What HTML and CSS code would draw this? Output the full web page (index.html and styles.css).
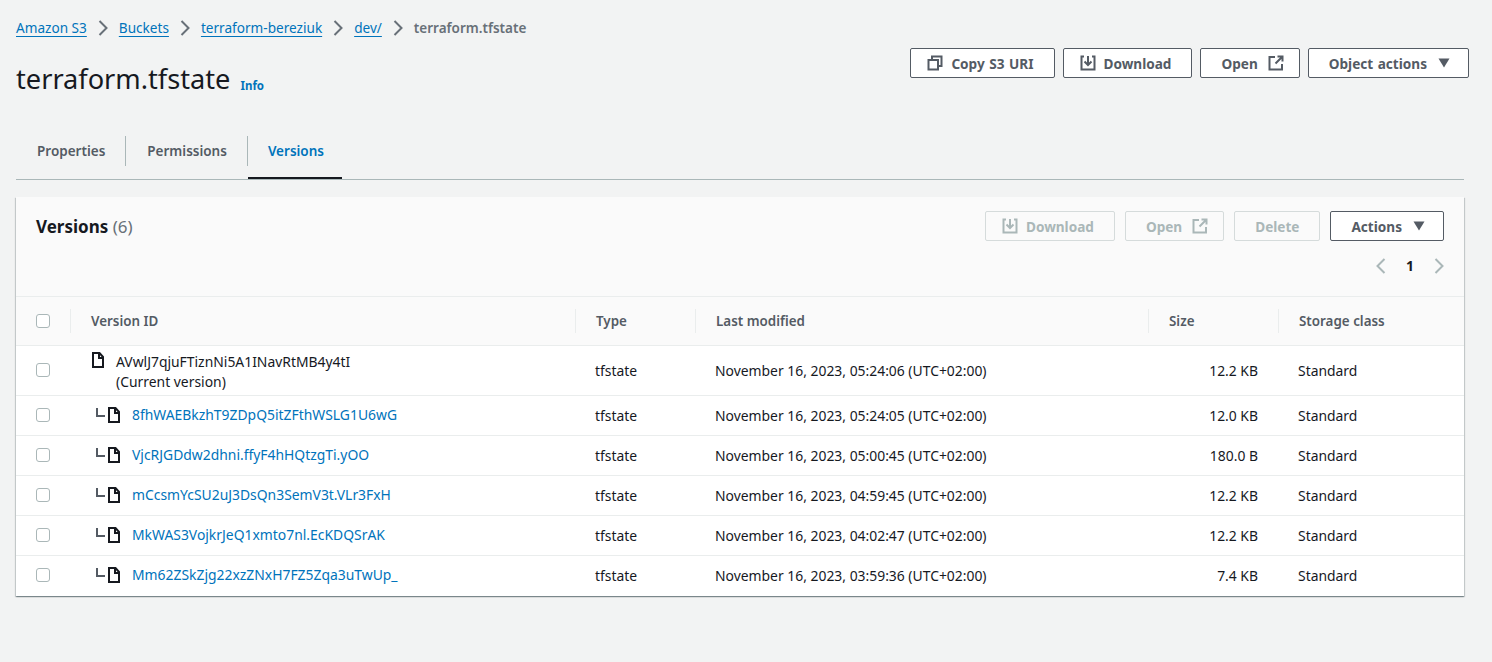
FILE: index.html
```html
<!DOCTYPE html>
<html lang="en">
<head>
    <meta charset="UTF-8">
    <meta name="viewport" content="width=device-width, initial-scale=1.0">
    <title>terraform.tfstate - S3 bucket</title>
    <link rel="stylesheet" href="styles.css">
</head>
<body>
    <svg class="sprites" width="0" height="0">
        <symbol id="i-file" viewBox="0 0 12 16"><path d="M1 1h6.500L11 5v10H1z M7 1v5h4" fill="none" stroke="currentColor" stroke-width="2"/></symbol>
        <symbol id="i-copy" viewBox="0 0 16 16"><path d="M1.500 5h9.500v9.500H1.500z M5 5V1.500h9.500V11H11" fill="none" stroke="currentColor" stroke-width="2"/></symbol>
        <symbol id="i-download" viewBox="0 0 16 16"><path d="M4 1.500H1.500v13h13v-13H12 M8 1v8 M4.500 6.500L8 10l3.500-3.500" fill="none" stroke="currentColor" stroke-width="2"/></symbol>
        <symbol id="i-external" viewBox="0 0 16 16"><path d="M7 2H1.500v12.500H14V9 M9.500 1.500H14.500V6.500 M14.500 1.500L7.500 8.500" fill="none" stroke="currentColor" stroke-width="2"/></symbol>
        <symbol id="i-left" viewBox="0 0 16 16"><path d="M11.500 1L4.500 8l7 7" fill="none" stroke="currentColor" stroke-width="2"/></symbol>
        <symbol id="i-right" viewBox="0 0 16 16"><path d="M4.500 1l7 7-7 7" fill="none" stroke="currentColor" stroke-width="2"/></symbol>
        <symbol id="i-caret" viewBox="0 0 12 10"><path d="M0.500 0.500h11L6 9.500z" fill="currentColor"/></symbol>
        <symbol id="i-child" viewBox="0 0 9 10"><path d="M1 0v8h8" fill="none" stroke="currentColor" stroke-width="2"/></symbol>
    </svg>

    <div class="page">
        <nav class="crumbs">
            <a href="#">Amazon S3</a>
            <svg class="crumb-sep"><use href="#i-right"/></svg>
            <a href="#">Buckets</a>
            <svg class="crumb-sep"><use href="#i-right"/></svg>
            <a href="#">terraform-bereziuk</a>
            <svg class="crumb-sep"><use href="#i-right"/></svg>
            <a href="#">dev/</a>
            <svg class="crumb-sep"><use href="#i-right"/></svg>
            <span class="crumb-current">terraform.tfstate</span>
        </nav>

        <div class="page-head">
            <div class="page-title">
                <h1>terraform.tfstate</h1>
                <a class="info" href="#">Info</a>
            </div>
            <div class="btn-row">
                <button class="btn"><svg class="ico lead"><use href="#i-copy"/></svg>Copy S3 URI</button>
                <button class="btn"><svg class="ico lead"><use href="#i-download"/></svg>Download</button>
                <button class="btn">Open<svg class="ico trail"><use href="#i-external"/></svg></button>
                <button class="btn">Object actions<svg class="caret"><use href="#i-caret"/></svg></button>
            </div>
        </div>

        <div class="tabs">
            <a class="tab" href="#">Properties</a>
            <a class="tab" href="#">Permissions</a>
            <a class="tab active" href="#">Versions</a>
        </div>

        <section class="card">
            <div class="card-head">
                <h2>Versions <span class="count">(6)</span></h2>
                <div class="card-tools">
                    <div class="btn-row tight">
                        <button class="btn off"><svg class="ico lead"><use href="#i-download"/></svg>Download</button>
                        <button class="btn off">Open<svg class="ico trail"><use href="#i-external"/></svg></button>
                        <button class="btn off">Delete</button>
                        <button class="btn">Actions<svg class="caret"><use href="#i-caret"/></svg></button>
                    </div>
                    <div class="pager">
                        <svg class="pager-arrow"><use href="#i-left"/></svg>
                        <span>1</span>
                        <svg class="pager-arrow"><use href="#i-right"/></svg>
                    </div>
                </div>
            </div>

            <table class="versions">
                <colgroup>
                    <col class="c-check">
                    <col class="c-id">
                    <col class="c-type">
                    <col class="c-date">
                    <col class="c-size">
                    <col>
                </colgroup>
                <thead>
                    <tr>
                        <th class="check"><span class="box"></span></th>
                        <th><span class="th-in">Version ID</span></th>
                        <th><span class="th-in">Type</span></th>
                        <th><span class="th-in">Last modified</span></th>
                        <th><span class="th-in">Size</span></th>
                        <th><span class="th-in">Storage class</span></th>
                    </tr>
                </thead>
                <tbody>
                    <tr class="current">
                        <td class="check"><span class="box"></span></td>
                        <td>
                            <div class="id-current">
                                <svg class="file"><use href="#i-file"/></svg>
                                <div>AVwlJ7qjuFTiznNi5A1INavRtMB4y4tI<br>(Current version)</div>
                            </div>
                        </td>
                        <td>tfstate</td>
                        <td>November 16, 2023, 05:24:06 (UTC+02:00)</td>
                        <td class="num">12.2 KB</td>
                        <td>Standard</td>
                    </tr>
                    <tr>
                        <td class="check"><span class="box"></span></td>
                        <td><div class="id-old"><svg class="child"><use href="#i-child"/></svg><svg class="file"><use href="#i-file"/></svg><a href="#">8fhWAEBkzhT9ZDpQ5itZFthWSLG1U6wG</a></div></td>
                        <td>tfstate</td>
                        <td>November 16, 2023, 05:24:05 (UTC+02:00)</td>
                        <td class="num">12.0 KB</td>
                        <td>Standard</td>
                    </tr>
                    <tr>
                        <td class="check"><span class="box"></span></td>
                        <td><div class="id-old"><svg class="child"><use href="#i-child"/></svg><svg class="file"><use href="#i-file"/></svg><a href="#">VjcRJGDdw2dhni.ffyF4hHQtzgTi.yOO</a></div></td>
                        <td>tfstate</td>
                        <td>November 16, 2023, 05:00:45 (UTC+02:00)</td>
                        <td class="num">180.0 B</td>
                        <td>Standard</td>
                    </tr>
                    <tr>
                        <td class="check"><span class="box"></span></td>
                        <td><div class="id-old"><svg class="child"><use href="#i-child"/></svg><svg class="file"><use href="#i-file"/></svg><a href="#">mCcsmYcSU2uJ3DsQn3SemV3t.VLr3FxH</a></div></td>
                        <td>tfstate</td>
                        <td>November 16, 2023, 04:59:45 (UTC+02:00)</td>
                        <td class="num">12.2 KB</td>
                        <td>Standard</td>
                    </tr>
                    <tr>
                        <td class="check"><span class="box"></span></td>
                        <td><div class="id-old"><svg class="child"><use href="#i-child"/></svg><svg class="file"><use href="#i-file"/></svg><a href="#">MkWAS3VojkrJeQ1xmto7nl.EcKDQSrAK</a></div></td>
                        <td>tfstate</td>
                        <td>November 16, 2023, 04:02:47 (UTC+02:00)</td>
                        <td class="num">12.2 KB</td>
                        <td>Standard</td>
                    </tr>
                    <tr>
                        <td class="check"><span class="box"></span></td>
                        <td><div class="id-old"><svg class="child"><use href="#i-child"/></svg><svg class="file"><use href="#i-file"/></svg><a href="#">Mm62ZSkZjg22xzZNxH7FZ5Zqa3uTwUp_</a></div></td>
                        <td>tfstate</td>
                        <td>November 16, 2023, 03:59:36 (UTC+02:00)</td>
                        <td class="num">7.4 KB</td>
                        <td>Standard</td>
                    </tr>
                </tbody>
            </table>
        </section>
    </div>
</body>
</html>
```

FILE: styles.css
```css
* {
    box-sizing: border-box;
}
html, body {
    height: 100%;
}
body {
    margin: 0;
    background-color: #f2f3f3;
    color: #16191f;
    font-family: "Noto Sans", "Open Sans", sans-serif;
    font-size: 13.9px;
    line-height: 20px;
    overflow: hidden;
}
a {
    color: #0073bb;
}
.sprites {
    display: block;
    height: 0;
}
.page {
    padding: 18px 28px 0 16px;
}

/* breadcrumbs */
.crumbs {
    display: flex;
    align-items: center;
    height: 20px;
    font-size: 13.6px;
}
.crumbs a {
    text-underline-offset: 3px;
}
.crumb-sep {
    width: 16px;
    height: 16px;
    margin: 0 8px;
    color: #687078;
}
.crumb-current {
    color: #687078;
    font-weight: 600;
    font-size: 13.5px;
}

/* title and main buttons */
.page-head {
    display: flex;
    justify-content: space-between;
    align-items: flex-start;
    margin-top: 10px;
    margin-right: -5px;
}
.page-title {
    display: flex;
    margin-top: 13px;
}
h1 {
    margin: 0;
    font-size: 27.2px;
    line-height: 36px;
    font-weight: 400;
}
.info {
    align-self: flex-end;
    margin: 0 0 1px 10px;
    font-size: 11.5px;
    font-weight: 700;
    text-decoration: none;
}
.btn-row {
    display: flex;
    gap: 8px;
}
.btn-row.tight {
    gap: 10px;
}
.btn {
    display: flex;
    align-items: center;
    gap: 8px;
    height: 30px;
    padding: 0 20px;
    background-color: #fff;
    border: 1px solid #545b64;
    border-radius: 2px;
    color: #545b64;
    font-family: inherit;
    font-size: 13.6px;
    font-weight: 700;
    word-spacing: 1px;
}
.btn .ico {
    width: 16px;
    height: 16px;
}
.btn .lead {
    margin-left: -4px;
}
.btn .trail {
    margin: 0 -5px 0 2px;
}
.btn .caret {
    width: 12px;
    height: 10px;
    margin: 0 -2px 0 3px;
}
.btn.off {
    background-color: transparent;
    border-color: #d5dbdb;
    color: #aab7b8;
}

/* tabs */
.tabs {
    display: flex;
    align-items: flex-start;
    height: 44px;
    margin-top: 39px;
    border-bottom: 1px solid #aab7b8;
}
.tab {
    position: relative;
    height: 30px;
    padding: 0 20px 0 21px;
    border-right: 1px solid #aab7b8;
    color: #545b64;
    font-size: 13.5px;
    font-weight: 600;
    line-height: 30px;
    text-decoration: none;
}
.tab:last-child {
    border-right: 0;
    padding: 0 18px 0 20px;
}
.tab.active {
    color: #0073bb;
}
.tab.active::after {
    content: "";
    position: absolute;
    left: 0;
    right: 0;
    bottom: -13px;
    height: 2px;
    background-color: #16191f;
}

/* card */
.card {
    margin-top: 17px;
    background-color: #fff;
    box-shadow: 0 1px 1px 0 rgba(0, 28, 36, 0.3), 1px 1px 1px 0 rgba(0, 28, 36, 0.15), -1px 1px 1px 0 rgba(0, 28, 36, 0.15);
}
.card-head {
    display: flex;
    justify-content: space-between;
    height: 100px;
    padding: 14px 20px 0;
    background-color: #fafafa;
    border-bottom: 1px solid #eaeded;
}
h2 {
    margin: 5px 0 0;
    font-size: 17px;
    line-height: 22px;
    font-weight: 700;
}
.count {
    color: #687078;
    font-weight: 400;
}
.card-tools {
    display: flex;
    flex-direction: column;
    align-items: flex-end;
}
.pager {
    display: flex;
    align-items: center;
    gap: 17px;
    margin-top: 15px;
    margin-right: -3px;
    font-weight: 700;
}
.pager-arrow {
    width: 16px;
    height: 16px;
    color: #aab7b8;
}

/* table */
.versions {
    width: 100%;
    border-collapse: collapse;
    table-layout: fixed;
}
.c-check { width: 54px; }
.c-id { width: 505px; }
.c-type { width: 120px; }
.c-date { width: 453px; }
.c-size { width: 130px; }
.versions thead tr {
    height: 48px;
    background-color: #fafafa;
}
.versions th {
    padding: 1px 0 0;
    border-bottom: 1px solid #eaeded;
    color: #545b64;
    font-size: 13.4px;
    font-weight: 600;
    text-align: left;
}
.th-in {
    display: block;
    padding-left: 20px;
    line-height: 24px;
    border-left: 1px solid #eaeded;
}
.versions td {
    height: 40px;
    padding: 2px 20px 0;
    border-bottom: 1px solid #eaeded;
}
.versions tr.current td {
    height: 50px;
}
.versions tbody tr:last-child td {
    height: 41px;
    padding-top: 1px;
    border-bottom: 0;
}
.versions th.check,
.versions td.check,
.versions tbody tr:last-child td.check {
    padding: 0 0 0 20px;
    line-height: 0;
}
.versions tbody tr:last-child td.check {
    padding-bottom: 1px;
}
.versions .num {
    text-align: right;
}
.box {
    display: inline-block;
    width: 14px;
    height: 14px;
    background-color: #fff;
    border: 1px solid #aab7b8;
    border-radius: 3px;
}
.file {
    flex: none;
    width: 12px;
    height: 16px;
    color: #16191f;
}
.child {
    flex: none;
    width: 9px;
    height: 10px;
    margin: -5px 3px 0 0;
    color: #545b64;
}
.id-current {
    display: flex;
    gap: 12px;
    margin: 2px 0 0 2px;
}
.id-old {
    display: flex;
    align-items: center;
    padding-left: 6px;
    margin-bottom: 2px;
}
.id-old .file {
    margin-right: 12px;
}
.id-old a {
    text-decoration: none;
}
```
